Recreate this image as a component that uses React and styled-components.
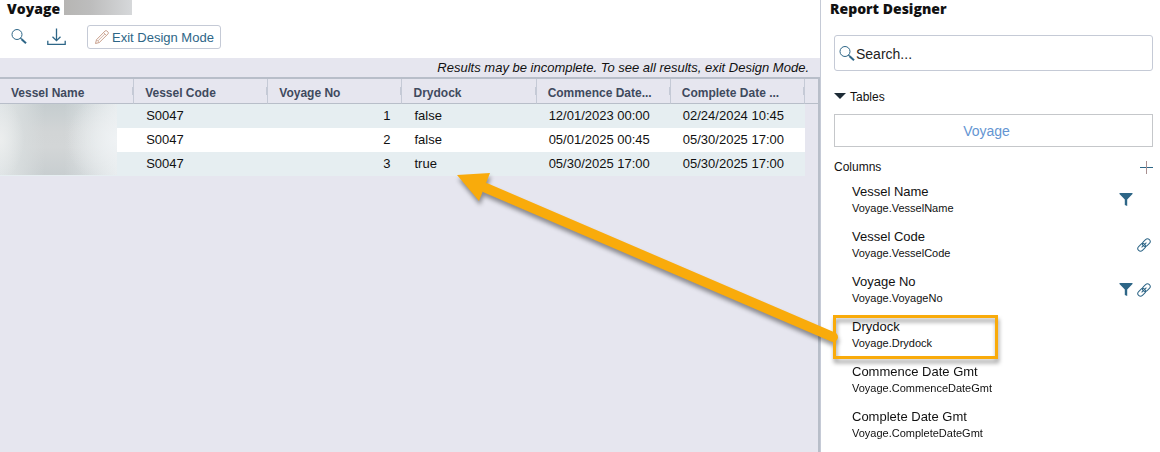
import styled, { createGlobalStyle } from "styled-components";

const colors = {
  blue: "#2e6687",
  lavender: "#e6e6ef",
  stripe: "#e6eef1",
  line: "#b8bec9",
  lineLight: "#c5cad6",
  orange: "#f9ab0b",
};

const voyages = [
  { code: "S0047", no: 1, drydock: "false", commence: "12/01/2023 00:00", complete: "02/24/2024 10:45" },
  { code: "S0047", no: 2, drydock: "false", commence: "05/01/2025 00:45", complete: "05/30/2025 17:00" },
  { code: "S0047", no: 3, drydock: "true", commence: "05/30/2025 17:00", complete: "05/30/2025 17:00" },
];

const headers = ["Vessel Name", "Vessel Code", "Voyage No", "Drydock", "Commence Date...", "Complete Date ..."];

const fields = [
  { label: "Vessel Name", path: "Voyage.VesselName", filter: true },
  { label: "Vessel Code", path: "Voyage.VesselCode", link: true },
  { label: "Voyage No", path: "Voyage.VoyageNo", filter: true, link: true },
  { label: "Drydock", path: "Voyage.Drydock", marked: true },
  { label: "Commence Date Gmt", path: "Voyage.CommenceDateGmt" },
  { label: "Complete Date Gmt", path: "Voyage.CompleteDateGmt" },
];

const SearchIcon = () => (
  <svg width="16" height="16" viewBox="0 0 16 16" fill="none" stroke={colors.blue} aria-hidden="true">
    <circle cx="6" cy="5.5" r="5" strokeWidth="1" />
    <path d="M9.4 9L10.8 10.4" strokeWidth="1.2" />
    <path d="M10.6 10.2L15 14.2" strokeWidth="2" />
  </svg>
);

const DownloadIcon = () => (
  <svg width="20" height="18" viewBox="0 0 20 18" fill="none" stroke={colors.blue} strokeWidth="1.3" aria-hidden="true">
    <path d="M9.5 0.5V12.5M5.5 8.7L9.5 12.7L13.5 8.7" />
    <path d="M0.8 12.8V16.4H18.2V12.8" />
  </svg>
);

const PencilIcon = () => (
  <svg width="16" height="16" viewBox="0 0 16 16" fill="none" stroke="#c9a08c" aria-hidden="true">
    <path d="M1.5 14.5L2.5 10.7L11.2 1.9Q12 1.2 12.8 1.9L14.1 3.2Q14.8 4 14.1 4.8L5.3 13.5Z" />
    <path d="M9.6 3.6L12.4 6.4M2.6 10.8L5.2 13.4M4 11.8L11 4.9" strokeWidth="0.8" />
  </svg>
);

const FilterIcon = () => (
  <svg width="14" height="14" viewBox="0 0 14 14" fill={colors.blue} aria-hidden="true">
    <path d="M0.5 0H13.5V1L8.2 6.5V13L5.8 12V6.5L0.5 1Z" />
  </svg>
);

const LinkIcon = () => (
  <svg width="14" height="14" viewBox="0 0 14 14" fill="none" stroke={colors.blue} aria-hidden="true">
    <g transform="rotate(-45 7 7)">
      <rect x="-0.6" y="4.3" width="8.6" height="5.4" rx="2.7" />
      <rect x="6" y="4.3" width="8.6" height="5.4" rx="2.7" />
      <path d="M3.6 7H10.4" />
    </g>
  </svg>
);

const PlusIcon = () => (
  <svg width="13" height="13" viewBox="0 0 13 13" fill="none" aria-hidden="true">
    <path d="M0 6.5H13" stroke={colors.blue} />
    <path d="M6.5 0V13" stroke="#a88f90" />
  </svg>
);

function App() {
  return (
    <>
      <GlobalStyle />
      <Page>
        <Results>
          <Title>
            Voyage
            <Redacted />
          </Title>
          <Toolbar>
            <IconButton aria-label="Search"><SearchIcon /></IconButton>
            <IconButton aria-label="Download"><DownloadIcon /></IconButton>
            <ExitButton>
              <PencilIcon />
              Exit Design Mode
            </ExitButton>
          </Toolbar>
          <Notice>Results may be incomplete. To see all results, exit Design Mode.</Notice>
          <TableArea>
            <Table>
              <thead>
                <tr>
                  {headers.map((header) => <HeadCell key={header}>{header}</HeadCell>)}
                  <EndCell />
                </tr>
              </thead>
              <tbody>
                {voyages.map((row, i) => (
                  <Row key={row.no}>
                    {i === 0 && <NameCell rowSpan={3}><NameBlur /></NameCell>}
                    <Cell>{row.code}</Cell>
                    <Cell $right>{row.no}</Cell>
                    <Cell>{row.drydock}</Cell>
                    <Cell>{row.commence}</Cell>
                    <Cell>{row.complete}</Cell>
                  </Row>
                ))}
              </tbody>
            </Table>
          </TableArea>
        </Results>
        <Designer>
          <Title as="h2">Report Designer</Title>
          <DesignerBody>
            <SearchBox>
              <SearchIcon />
              <SearchInput type="text" aria-label="Search" placeholder="Search..." />
            </SearchBox>
            <Toggle>
              <svg width="12" height="8" viewBox="0 0 12 8" aria-hidden="true">
                <path d="M0 0H12L6 6Z" fill="#1d2b36" />
              </svg>
              Tables
            </Toggle>
            <TableButton>Voyage</TableButton>
            <ColumnsBar>
              Columns
              <IconButton aria-label="Add column"><PlusIcon /></IconButton>
            </ColumnsBar>
            <FieldList>
              {fields.map((field) => (
                <Field key={field.path}>
                  <div>
                    <FieldName>{field.label}</FieldName>
                    <FieldPath>{field.path}</FieldPath>
                  </div>
                  <FieldIcons>
                    <IconSlot>{field.filter && <FilterIcon />}</IconSlot>
                    <IconSlot>{field.link && <LinkIcon />}</IconSlot>
                  </FieldIcons>
                  {field.marked && (
                    <Highlight>
                      <Arrow width="390" height="180" viewBox="0 0 390 180" aria-hidden="true">
                        <path d="M32 18L379 167" stroke={colors.orange} strokeWidth="10" strokeLinecap="round" />
                        <path d="M3 5L36 3L25 31Z" fill={colors.orange} />
                      </Arrow>
                    </Highlight>
                  )}
                </Field>
              ))}
            </FieldList>
          </DesignerBody>
        </Designer>
      </Page>
    </>
  );
}

const GlobalStyle = createGlobalStyle`
  * {
    box-sizing: border-box;
  }
  body {
    margin: 0;
    background: #fff;
    color: #111;
    font: 13px/16px "Liberation Sans", Arial, sans-serif;
    overflow: hidden;
  }
  button, input {
    font-family: inherit;
    padding: 0;
    border: 0;
    background: none;
  }
  svg {
    display: block;
    flex: none;
  }
`;

const Page = styled.div`
  display: grid;
  grid-template-columns: minmax(0, 1fr) 340px;
  min-height: 100vh;
`;

const Results = styled.main`
  display: flex;
  flex-direction: column;
`;

const Title = styled.h1`
  display: flex;
  gap: 4px;
  height: 18px;
  margin: 0;
  padding-left: 7px;
  font: 800 14px/18px "Open Sans", sans-serif;
`;

const Redacted = styled.span`
  width: 68px;
  height: 15px;
  background: linear-gradient(90deg, #b6b5b3, #bdbdbd 40%, #d6d8da);
`;

const Toolbar = styled.div`
  display: flex;
  align-items: center;
  gap: 20px;
  height: 40px;
  padding: 0 11px 2px;
`;

const IconButton = styled.button`
  display: flex;
`;

const ExitButton = styled.button`
  display: flex;
  align-items: center;
  gap: 2px;
  height: 24px;
  padding: 0 6px;
  border: 1px solid ${colors.lineLight};
  border-radius: 3px;
  color: ${colors.blue};
  font-size: 13px;
`;

const Notice = styled.p`
  margin: 0;
  padding: 2px 11px 1px;
  background: ${colors.lavender};
  font-style: italic;
  text-align: right;
`;

const TableArea = styled.div`
  flex: 1;
  background: ${colors.lavender};
  border: 2px solid ${colors.line};
  border-width: 2px 2px 0 0;
`;

const Table = styled.table`
  width: 100%;
  table-layout: fixed;
  border-collapse: separate;
  border-spacing: 0;
`;

const HeadCell = styled.th`
  height: 25px;
  padding: 3px 0 0 11px;
  border-right: 1px solid ${colors.lineLight};
  border-bottom: 1px solid ${colors.line};
  background: linear-gradient(${colors.lineLight}, ${colors.lineLight}) right center / 1px 8px no-repeat;
  color: #3f4a5e;
  font-size: 12px;
  text-align: left;
  white-space: nowrap;
`;

const EndCell = styled.td`
  width: 13px;
  border-bottom: 1px solid ${colors.line};
`;

const Row = styled.tr`
  background: ${colors.stripe};

  &:nth-child(even) {
    background: #fff;
  }
`;

const Cell = styled.td`
  height: 24px;
  padding: 0 12px;
  text-align: ${(props) => (props.$right ? "right" : "left")};
  white-space: nowrap;
`;

const NameCell = styled.td`
  padding: 0;
  vertical-align: top;
  background: linear-gradient(${colors.stripe} 24px, #fff 24px 48px, ${colors.stripe} 48px);
`;

const NameBlur = styled.div`
  width: 117px;
  height: 71px;
  background:
    radial-gradient(ellipse 24px 40px at 0 50%, #eceeee, transparent),
    radial-gradient(ellipse 50px 50px at 100% 50%, #eff2f4, transparent),
    linear-gradient(90deg, #dfe4e6 0, #d9dedf 12%, transparent 38%, transparent 55%, #e6ebed 100%),
    linear-gradient(#c5cdcf, #d2d5d6 40%, #d3d6d7 60%, #c8ced0);
`;

const Designer = styled.aside`
  border-left: 1px solid ${colors.lineLight};

  > h2 {
    padding-left: 9px;
  }
`;

const DesignerBody = styled.div`
  padding: 17px 7px 0 13px;
`;

const SearchBox = styled.div`
  display: flex;
  align-items: center;
  gap: 1px;
  height: 36px;
  padding: 2px 4px 0;
  border: 1px solid ${colors.lineLight};
  border-radius: 3px;
`;

const SearchInput = styled.input`
  flex: 1;
  min-width: 0;
  font-size: 14px;
  outline: none;

  &::placeholder {
    color: #222;
    opacity: 1;
  }
`;

const Toggle = styled.button`
  display: flex;
  align-items: center;
  gap: 4px;
  margin-top: 18px;
  font-size: 12px;
  line-height: 16px;
  color: #111;
`;

const TableButton = styled.button`
  width: 100%;
  height: 33px;
  margin-top: 9px;
  padding-right: 14px;
  border: 1px solid #c5c7ca;
  color: #6495d2;
  font-size: 14px;
`;

const ColumnsBar = styled.div`
  display: flex;
  align-items: center;
  justify-content: space-between;
  margin-top: 12px;
  font-size: 12px;
`;

const FieldList = styled.ul`
  margin: 0;
  padding: 8px 0 0 18px;
  list-style: none;
`;

const Field = styled.li`
  position: relative;
  display: flex;
  justify-content: space-between;
  height: 45px;
`;

const FieldName = styled.div`
  line-height: 17px;
`;

const FieldPath = styled.div`
  font-size: 11px;
  line-height: 16px;
`;

const FieldIcons = styled.div`
  display: flex;
  gap: 4px;
  padding: 10px 2px 0 0;
`;

const IconSlot = styled.span`
  width: 14px;
`;

const Highlight = styled.div`
  position: absolute;
  top: -3px;
  left: -19px;
  width: 165px;
  height: 44px;
  border: 3px solid ${colors.orange};
  filter: drop-shadow(1px 4px 2px rgba(0, 0, 0, 0.4));
`;

const Arrow = styled.svg`
  position: absolute;
  right: 151px;
  bottom: 6px;
`;

export default App;
